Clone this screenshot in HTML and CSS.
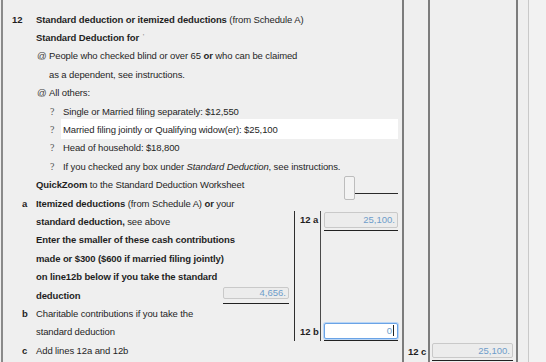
FILE: index.html
```html
<!DOCTYPE html>
<html>
<head>
<meta charset="utf-8">
<link rel="stylesheet" href="styles.css">
</head>
<body>
<div class="page">
  <div class="main">
    <div class="row"><span class="num">12</span><span class="txt"><b>Standard deduction or itemized deductions</b> (from Schedule A)</span></div>
    <div class="row ind0"><span class="txt"><b>Standard Deduction for</b> <span class="tick">'</span></span></div>
    <div class="row ind1"><span class="bul">@</span><span class="txt">People who checked blind or over 65 <b>or</b> who can be claimed</span></div>
    <div class="row ind1b"><span class="txt">as a dependent, see instructions.</span></div>
    <div class="row ind1"><span class="bul">@</span><span class="txt">All others:</span></div>
    <div class="row ind2"><span class="q">?</span><span class="txt">Single or Married filing separately: $12,550</span></div>
    <div class="row ind2"><span class="q">?</span><span class="txt hl">Married filing jointly or Qualifying widow(er): $25,100</span></div>
    <div class="row ind2"><span class="q">?</span><span class="txt">Head of household: $18,800</span></div>
    <div class="row ind2"><span class="q">?</span><span class="txt">If you checked any box under <i>Standard Deduction</i>, see instructions.</span></div>
    <div class="row ind0"><span class="txt"><b>QuickZoom</b> to the Standard Deduction Worksheet</span><span class="qz"><span class="qzbox"></span><span class="qzline"></span></span></div>

    <div class="lower">
      <div class="row gr1 c1"><span class="let">a</span><span class="txt"><b>Itemized deductions</b> (from Schedule A) <b>or</b> your</span></div>
      <div class="row gr2 c1 indl"><span class="txt"><b>standard deduction,</b> see above</span></div>
      <div class="row gr3 c1 indl"><span class="txt"><b>Enter the smaller of these cash contributions</b></span></div>
      <div class="row gr4 c1 indl"><span class="txt"><b>made or $300 ($600 if married filing jointly)</b></span></div>
      <div class="row gr5 c1 indl"><span class="txt"><b>on line12b below if you take the standard</b></span></div>
      <div class="row gr6 c1 indl"><span class="txt"><b>deduction</b></span>
        <span class="field small"><span class="box">4,656.</span></span>
      </div>
      <div class="row gr7 c1"><span class="let">b</span><span class="txt">Charitable contributions if you take the</span></div>
      <div class="row gr8 c1 indl"><span class="txt">standard deduction</span></div>
      <div class="row gr9 c1"><span class="let">c</span><span class="txt">Add lines 12a and 12b</span></div>

      <div class="labcol">
        <span class="lbl">12 a</span>
        <span class="lbl">12 b</span>
      </div>
      <div class="inpcell gr2 c3"><span class="field mid"><span class="box">25,100.</span></span></div>
      <div class="inpcell gr8 c3"><span class="field mid"><span class="box focus">0<span class="caret"></span></span></span></div>
    </div>
  </div>
  <div class="col12c"><span class="lbl">12 c</span></div>
  <div class="colamt"><span class="field wide"><span class="box">25,100.</span></span></div>
  <div class="rmargin"></div>
  <div class="rest"></div>
</div>
</body>
</html>
```

FILE: styles.css
```css
* { box-sizing: border-box; }
html, body { margin: 0; padding: 0; }
body {
  background: #efefef;
  font-family: "Liberation Sans", Arial, sans-serif;
  font-size: 9.5px;
  letter-spacing: -0.11px;
  color: #1f1f1f;
  width: 546px;
  height: 362px;
  overflow: hidden;
}
b { font-weight: bold; }

.page {
  display: flex;
  height: 362px;
}

.main {
  margin-left: 1px;
  width: 401px;
  border-left: 2px solid #8a8a8a;
  padding-top: 10px;
  display: flex;
  flex-direction: column;
}

.row {
  display: flex;
  align-items: center;
  height: 18.4px;
  white-space: nowrap;
}

.num {
  width: 33px;
  padding-left: 9px;
  font-weight: bold;
}
.ind0 { padding-left: 33px; }
.ind1 { padding-left: 34px; }
.ind1b { padding-left: 46px; }
.ind2 { padding-left: 47px; }
.indl { padding-left: 33px; }

.bul { width: 12px; color: #444; }
.q { width: 13px; color: #555; font-family: "Liberation Serif", serif; font-size: 10px; }
.tick { color: #8a8a8a; font-weight: normal; font-size: 8px; vertical-align: top; margin-left: 1px; }

.hl {
  flex: 1;
  background: #ffffff;
  align-self: stretch;
  display: flex;
  align-items: center;
  margin-left: -2px;
  padding-left: 2px;
  margin-right: 4px;
  margin-top: -1px;
}

.qz {
  display: flex;
  margin-left: auto;
  margin-right: 4px;
  align-self: flex-start;
}
.qzbox {
  width: 11px;
  height: 24px;
  border: 1px solid #bdbdbd;
  border-radius: 2px;
  background: #f3f3f3;
}
.qzline {
  width: 43px;
  height: 1px;
  margin-top: 17px;
  background: #2a2a2a;
}

.lower {
  display: grid;
  grid-template-columns: 291px 27px 81px;
  grid-template-rows: repeat(9, 18.4px);
}
.c1 { grid-column: 1; }
.c3 { grid-column: 3; }
.gr1 { grid-row: 1; }
.gr2 { grid-row: 2; }
.gr3 { grid-row: 3; }
.gr4 { grid-row: 4; }
.gr5 { grid-row: 5; }
.gr6 { grid-row: 6; }
.gr7 { grid-row: 7; }
.gr8 { grid-row: 8; }
.gr9 { grid-row: 9 / span 1; grid-column: 1 / span 3; }

.let {
  width: 33px;
  padding-left: 19px;
  font-weight: bold;
}

.labcol {
  grid-column: 2;
  grid-row: 2 / 9;
  border-left: 1px solid #2e2e2e;
  border-right: 1px solid #4a4a4a;
  display: flex;
  flex-direction: column;
  justify-content: space-between;
  padding-left: 5px;
  margin-top: -1px;
}
.lbl {
  font-weight: bold;
  line-height: 18.4px;
  color: #1f1f1f;
}

.inpcell {
  display: flex;
  padding-left: 3px;
  padding-right: 4px;
}

.field {
  display: flex;
  flex-direction: column;
  border-bottom: 1.5px solid #222;
}
.box {
  display: block;
  border: 1px solid #c9c9c9;
  border-radius: 2px;
  background: #ececec;
  color: #6f9dca;
  text-align: right;
  padding-right: 2px;
  white-space: nowrap;
  letter-spacing: 0;
}
.field.mid { width: 74px; padding-bottom: 2px; }
.field.mid .box { height: 16px; line-height: 14px; }
.field.small {
  width: 66px;
  margin-left: auto;
  margin-right: 5px;
  padding-bottom: 4px;
  align-self: flex-start;
  margin-top: 1px;
}
.field.small .box { height: 12px; line-height: 10px; }

.box.focus {
  background: #ffffff;
  border: 1px solid #6aa3e6;
  box-shadow: 0 0 0 1px #b9d5f5;
  padding-right: 3px;
  display: flex;
  justify-content: flex-end;
  align-items: center;
}
.caret {
  display: inline-block;
  width: 1px;
  height: 11px;
  background: #222;
  margin-left: 1px;
}

.col12c {
  width: 26px;
  border-left: 2px solid #7c7c7c;
  display: flex;
  flex-direction: column;
  justify-content: flex-end;
  padding-left: 4px;
  padding-bottom: 1px;
}

.colamt {
  width: 90px;
  border-left: 2px solid #7c7c7c;
  border-right: 2px solid #7c7c7c;
  display: flex;
  flex-direction: column;
  justify-content: flex-end;
  padding-left: 2px;
  padding-bottom: 1px;
}
.field.wide { width: 81px; padding-bottom: 2px; }
.field.wide .box { height: 15px; line-height: 13px; }

.rmargin {
  width: 11px;
  border-right: 1px solid #c9c9c9;
}
.rest {
  flex: 1;
  background: #f2f2f2;
}
```
